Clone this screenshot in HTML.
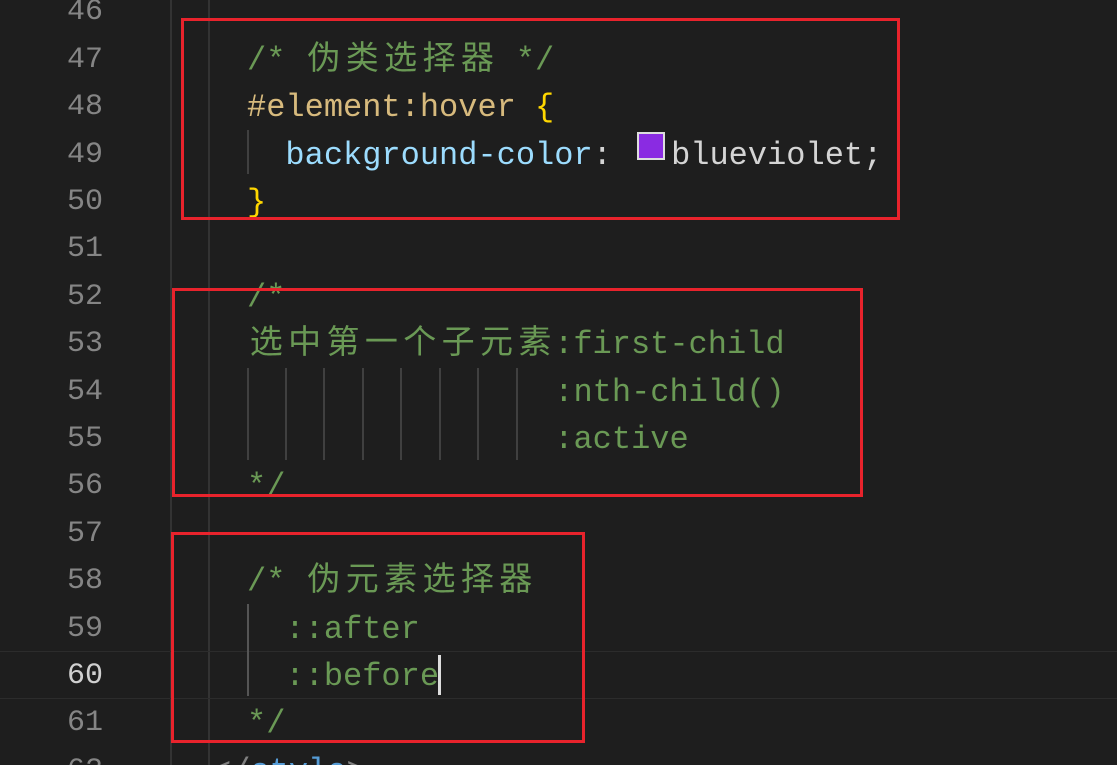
<!DOCTYPE html>
<html><head><meta charset="utf-8"><style>
html,body{margin:0;padding:0;background:#1e1e1e;width:1117px;height:765px;overflow:hidden;position:relative;font-family:"Liberation Mono","Noto Sans CJK SC",monospace;}
#w{position:absolute;left:0;top:3px;width:1117px;height:765px}
.ln{position:absolute;left:0;width:103px;text-align:right;font-size:30px;color:#858585;height:47.4px;line-height:47.4px;}
.cd{position:absolute;left:247px;font-size:32px;height:47.4px;line-height:47.4px;white-space:pre;color:#d4d4d4;}
.c{color:#6a9955}.s{color:#d7ba7d}.b{color:#ffd700}.p{color:#9cdcfe}
.k{display:inline-block;width:38.4px;text-align:center;font-size:33px}
.v{position:absolute;width:2px;background:#3a3a3a}
.box{position:absolute;border:3px solid #e8232c;box-sizing:border-box}
</style></head><body>
<div class="v" style="left:170px;top:0;height:765px;background:#333"></div>
<div class="v" style="left:208px;top:0;height:765px;background:#333"></div>
<div style="position:absolute;left:0;right:0;top:651px;height:46px;border-top:1px solid #2c2c2c;border-bottom:1px solid #2c2c2c"></div>
<div class="v" style="left:247px;top:130px;height:44px;background:#404040"></div>
<div class="v" style="left:247px;top:604px;height:92px;background:#555"></div>
<div class="v" style="left:247px;top:368px;height:92px;background:#404040"></div>
<div class="v" style="left:285px;top:368px;height:92px;background:#404040"></div>
<div class="v" style="left:323px;top:368px;height:92px;background:#404040"></div>
<div class="v" style="left:362px;top:368px;height:92px;background:#404040"></div>
<div class="v" style="left:400px;top:368px;height:92px;background:#404040"></div>
<div class="v" style="left:439px;top:368px;height:92px;background:#404040"></div>
<div class="v" style="left:477px;top:368px;height:92px;background:#404040"></div>
<div class="v" style="left:516px;top:368px;height:92px;background:#404040"></div>
<div id="w">
<div class="ln" style="top:-13.7px">46</div>
<div class="ln" style="top:33.7px">47</div>
<div class="ln" style="top:81.1px">48</div>
<div class="ln" style="top:128.5px">49</div>
<div class="ln" style="top:175.9px">50</div>
<div class="ln" style="top:223.3px">51</div>
<div class="ln" style="top:270.7px">52</div>
<div class="ln" style="top:318.1px">53</div>
<div class="ln" style="top:365.5px">54</div>
<div class="ln" style="top:412.9px">55</div>
<div class="ln" style="top:460.3px">56</div>
<div class="ln" style="top:507.7px">57</div>
<div class="ln" style="top:555.1px">58</div>
<div class="ln" style="top:602.5px">59</div>
<div class="ln" style="top:649.9px;color:#d0d0d0">60</div>
<div class="ln" style="top:697.3px">61</div>
<div class="ln" style="top:744.7px">62</div>

<div class="cd c" style="top:33.7px">/* <span class="k">伪</span><span class="k">类</span><span class="k">选</span><span class="k">择</span><span class="k">器</span> */</div>
<div class="cd" style="top:81.1px"><span class="s">#element:hover</span> <span class="b">{</span></div>
<div class="cd" style="top:128.5px">  <span class="p">background-color</span>: <span style="display:inline-block;width:40px;position:relative;height:20px"><span style="position:absolute;left:6px;top:-12px;width:24px;height:24px;background:#8a2be2;border:2px solid #ddd;"></span></span>blueviolet;</div>
<div class="cd b" style="top:175.9px">}</div>
<div class="cd c" style="top:270.7px">/*</div>
<div class="cd c" style="top:318.1px"><span class="k">选</span><span class="k">中</span><span class="k">第</span><span class="k">一</span><span class="k">个</span><span class="k">子</span><span class="k">元</span><span class="k">素</span>:first-child</div>
<div class="cd c" style="top:365.5px">                :nth-child()</div>
<div class="cd c" style="top:412.9px">                :active</div>
<div class="cd c" style="top:460.3px">*/</div>
<div class="cd c" style="top:555.1px">/* <span class="k">伪</span><span class="k">元</span><span class="k">素</span><span class="k">选</span><span class="k">择</span><span class="k">器</span></div>
<div class="cd c" style="top:602.5px">  ::after</div>
<div class="cd c" style="top:649.9px">  ::before</div>
<div class="cd c" style="top:697.3px">*/</div>
<div class="cd" style="top:744.7px;left:212px;color:#808080">&lt;/<span style="color:#569cd6">style</span>&gt;</div>
</div>
<div style="position:absolute;left:438px;top:655px;width:3px;height:40px;background:#ddd"></div>
<div class="box" style="left:181px;top:18px;width:719px;height:202px"></div>
<div class="box" style="left:172px;top:288px;width:691px;height:209px"></div>
<div class="box" style="left:171px;top:532px;width:414px;height:211px"></div>
</body></html>
